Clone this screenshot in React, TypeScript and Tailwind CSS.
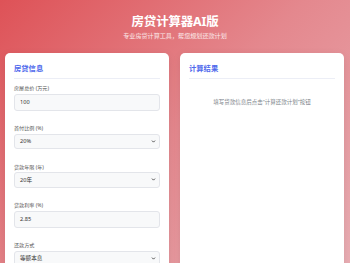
import { ChevronDown } from 'lucide-react';

const font = { fontFamily: '"Noto Sans", "Noto Sans CJK SC", sans-serif' };

type Field = { label: string; value: string; kind: 'input' | 'select' };

const fields: Field[] = [
  { label: '房屋总价 (万元)', value: '100', kind: 'input' },
  { label: '首付比例 (%)', value: '20%', kind: 'select' },
  { label: '贷款年限 (年)', value: '20年', kind: 'select' },
  { label: '贷款利率 (%)', value: '2.85', kind: 'input' },
  { label: '还款方式', value: '等额本息', kind: 'select' },
];

function CardTitle({ children }: { children: string }) {
  return (
    <div className="pt-[1px] pb-[5px] border-b border-[#eceef6]">
      <h2 className="text-[7.3px] leading-[10px] font-bold text-[#4f69ec]">{children}</h2>
    </div>
  );
}

export default function App() {
  return (
    <div
      className="h-screen overflow-hidden bg-[linear-gradient(135deg,#de5257_0%,#e4888e_50%,#e9adb3_100%)]"
      style={font}
    >
      <header className="pt-[14px] mb-[13px] text-center text-white">
        <h1 className="text-[12.5px] leading-[15px] font-bold tracking-[-0.2px]">房贷计算器AI版</h1>
        <p className="mt-[2.5px] text-[6.1px] leading-[8px] text-white/85">专业房贷计算工具，帮您规划还款计划</p>
      </header>

      <div className="grid grid-cols-2 gap-[11px] pl-[5px] pr-[6px]">
        {/* 左侧表单 */}
        <section className="bg-white rounded-[5px] p-[9px] shadow-[0_2px_8px_rgba(0,0,0,0.08)] min-h-[240px]">
          <CardTitle>房贷信息</CardTitle>
          <div className="mt-[6.5px]">
            {fields.map((f) => (
              <div key={f.label} className="mb-[14.5px]">
                <label className="block text-[5.1px] leading-[7px] text-[#555] mb-[1.5px]">{f.label}</label>
                {f.kind === 'input' ? (
                  <div className="h-[17px] flex items-center px-[5px] bg-[#f8f9fa] border border-[#e3e5ea] rounded-[3px] text-[5.6px] text-[#333]">
                    {f.value}
                  </div>
                ) : (
                  <div className="h-[15.5px] flex items-center justify-between px-[5px] bg-[#f8f9fa] border border-[#e3e5ea] rounded-[3px] text-[5.6px] text-[#333]">
                    <span>{f.value}</span>
                    <ChevronDown className="w-[5px] h-[5px] text-[#333] -mr-[2px]" strokeWidth={4} />
                  </div>
                )}
              </div>
            ))}
          </div>
        </section>

        {/* 右侧结果 */}
        <section className="bg-white rounded-[5px] p-[9px] shadow-[0_2px_8px_rgba(0,0,0,0.08)] min-h-[240px]">
          <CardTitle>计算结果</CardTitle>
          <p className="mt-[20px] text-center text-[5.5px] leading-[7px] text-[#7a7f88]">
            填写贷款信息后点击“计算还款计划”按钮
          </p>
        </section>
      </div>
    </div>
  );
}
